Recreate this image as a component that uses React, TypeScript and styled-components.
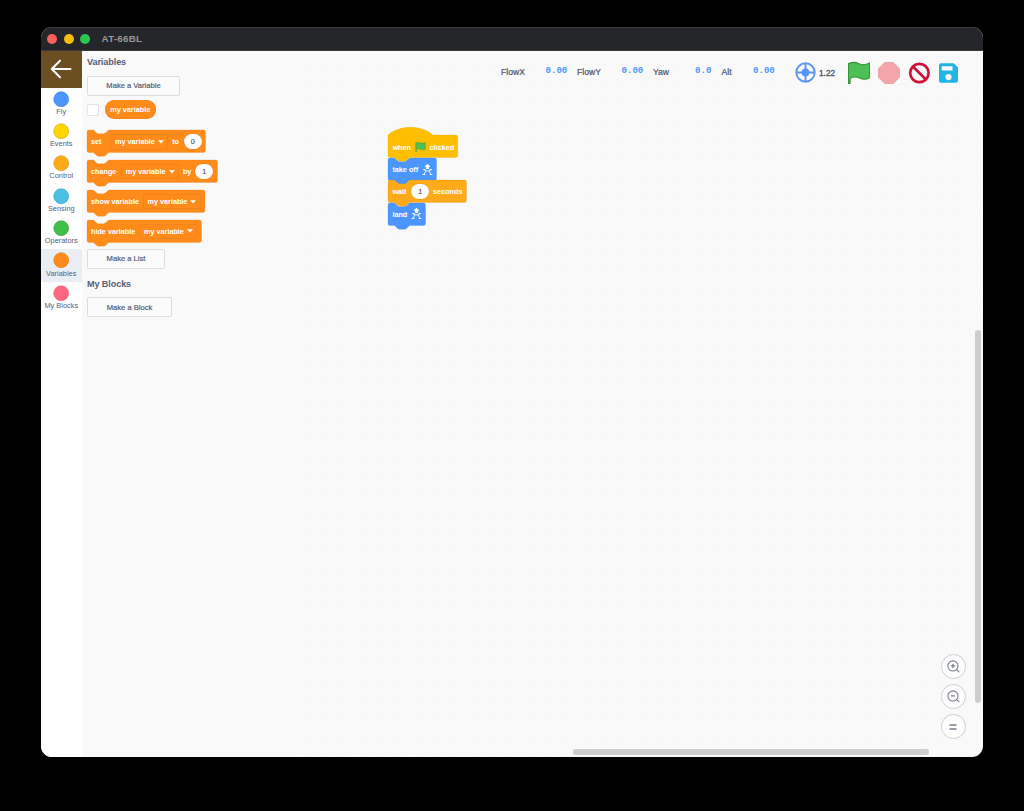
import React from "react";
import styled, { createGlobalStyle } from "styled-components";

const Global = createGlobalStyle`
  * { box-sizing: border-box; }
  body { margin: 0; background: #000; font-family: "Liberation Sans", Arial, sans-serif; overflow: hidden; }
`;
const Desktop = styled.div`
  width: 1024px; height: 811px; background: #000; padding: 27px 0 0 40.5px;
`;
const Window = styled.div`
  width: 942.7px; height: 730.3px; border-radius: 11px; overflow: hidden; background: #f9f9f9;
  display: flex; flex-direction: column;
`;
const TitleBar = styled.div`
  height: 24px; flex: none; background: #252629; border-bottom: 1px solid #3b3a3f; box-shadow: inset 0 1px #3a3a3c;
  display: flex; align-items: center; padding-left: 6.5px; gap: 6.7px;
`;
const Light = styled.span<{ $c: string }>`
  width: 10px; height: 10px; border-radius: 50%; background: ${(p) => p.$c};
`;
const Title = styled.span`
  margin-left: 4.5px; font: bold 9.8px "Liberation Sans", sans-serif; color: #98989b; letter-spacing: 0.25px;
`;
const Body = styled.div`display: flex; flex: 1; min-height: 0;`;
const Sidebar = styled.nav`width: 41.5px; flex: none; background: #fff;`;
const Back = styled.button`
  display: flex; align-items: center; justify-content: center; width: 100%; height: 36.5px;
  background: #6b4f22; border: 0; padding: 0;
`;
const Category = styled.div<{ $on?: boolean }>`
  height: 32.4px; display: flex; flex-direction: column; align-items: center; padding-top: 3px;
  background: ${(p) => (p.$on ? "#e9eef5" : "transparent")};
  font-size: 7.4px; line-height: 9px; color: #575e75; white-space: nowrap;
`;
const Dot = styled.svg`flex: none; margin-bottom: 0.1px;`;
const Flyout = styled.section`
  width: 203px; flex: none; padding: 5px 0 0 5px; display: flex; flex-direction: column; align-items: flex-start;
`;
const Heading = styled.h2<{ $mt?: number }>`
  margin: ${(p) => p.$mt ?? 0}px 0 0; font-size: 9.1px; line-height: 12px; font-weight: bold; color: #575e75;
  letter-spacing: -0.1px;
`;
const FlyButton = styled.button<{ $w: number; $mt: number }>`
  width: ${(p) => p.$w}px; height: 19.5px; margin: ${(p) => p.$mt}px 0 0; padding: 0;
  border: 1px solid #dcdde2; border-radius: 2px; background: #fbfbfb;
  font: 500 7.6px "Liberation Sans", sans-serif; color: #575e75; -webkit-text-stroke: 0.2px #575e75;
`;
const VariableRow = styled.div`display: flex; align-items: center; gap: 5.5px; margin-top: 4px; height: 20px;`;
const Check = styled.span`width: 12px; height: 12px; border: 1px solid #e2e2e6; border-radius: 2px; background: #fff;`;
const Pill = styled.span`
  width: 51.5px; height: 19px; border-radius: 10px; background: #ff8c1a; box-shadow: inset 0 0 0 0.5px #f5821a;
  display: flex; align-items: center; justify-content: center;
  font-size: 7.3px; font-weight: bold; color: #fff;
`;
const BlockList = styled.div`display: flex; flex-direction: column; gap: 7.4px; margin-top: 10.7px;`;
const BlockBox = styled.div<{ $w: number }>`
  position: relative; width: ${(p) => p.$w}px; height: 22.45px; display: flex; align-items: center;
  padding: 1px 0 0 4px; font-size: 7.25px; font-weight: bold; color: #fff; white-space: nowrap;
`;
const Outline = styled.svg`position: absolute; left: 0; top: 0; overflow: visible;`;
const Word = styled.span<{ $w: number }>`position: relative; width: ${(p) => p.$w}px; flex: none;`;
const Dropdown = styled.span`
  position: relative; width: 58px; height: 15.5px; flex: none; border: 1px solid #f5821a; border-radius: 2px;
  display: flex; align-items: center; gap: 3px; padding-left: 4px;
`;
const Caret = styled.svg`flex: none;`;
const NumberField = styled.span<{ $b: string }>`
  position: relative; width: 18px; height: 15px; flex: none; border-radius: 8px; background: #fff;
  color: #575e75; font-weight: normal; -webkit-text-stroke: 0.2px #575e75; box-shadow: 0 0 0 0.3px ${(p) => p.$b};
  display: flex; align-items: center; justify-content: center;
`;
const Glyph = styled.svg`position: relative; flex: none;`;
const Workspace = styled.main`
  flex: 1; min-width: 0; display: flex; flex-direction: column; position: relative;
  background:
    linear-gradient(#f9f9f9, #f9f9f9) 0 0 / 14px 100% no-repeat,
    radial-gradient(circle, #ebebeb 0.5px, transparent 1.1px) 10.2px 4.3px / 18.71px 18.71px;
`;
const Toolbar = styled.header`
  height: 43px; display: flex; align-items: center; padding-left: 216px; color: #4c5269;
`;
const StatLabel = styled.span<{ $w: number }>`
  width: ${(p) => p.$w}px; font-size: 8.6px; -webkit-text-stroke: 0.2px #4c5269; margin-top: -1.5px;
`;
const StatValue = styled.span<{ $w: number }>`
  width: ${(p) => p.$w}px; font: bold 9.1px "Liberation Mono", monospace; color: #4c97ff; margin-top: -4px;
`;
const Version = styled.span`width: 28.5px; margin-left: 3px; font-size: 8.3px; -webkit-text-stroke: 0.3px #4c5269;`;
const Tool = styled.svg<{ $ml?: number }>`flex: none; margin-left: ${(p) => p.$ml ?? 0}px; overflow: visible;`;
const Script = styled.div`
  position: absolute; left: 103.4px; top: 84.4px; display: flex; flex-direction: column;
`;
const ZoomControls = styled.div`
  position: absolute; left: 655.6px; top: 602.8px; display: flex; flex-direction: column; gap: 5.3px;
`;
const ZoomButton = styled.button`
  width: 25px; height: 25px; border-radius: 50%; border: 1px solid #cfcfd2; background: #fff; padding: 0;
  display: flex; align-items: center; justify-content: center;
`;
const VScroll = styled.div`
  position: absolute; left: 690px; top: 279px; width: 6px; height: 373px; border-radius: 3px; background: #cecdce;
`;
const HScroll = styled.div`
  position: absolute; left: 288px; top: 698px; width: 356px; height: 6px; border-radius: 3px; background: #cecdce;
`;

const SCALE = 0.4677;
const NOTCH = "c2 0 3 1 4 2l4 4c1 1 2 2 4 2h12c2 0 3-1 4-2l4-4c1-1 2-2 4-2";
const NOTCH_BACK = "c-2 0-3 1-4 2l-4 4c-1 1-2 2-4 2h-12c-2 0-3-1-4-2l-4-4c-1-1-2-2-4-2";

type BlockProps = { w: number; fill: string; stroke: string; hat?: boolean; children: React.ReactNode };
function Block({ w, fill, stroke, hat, children }: BlockProps) {
  const u = w / SCALE;
  const start = hat ? "M0 0c25-22 71-22 96 0" : `M0 4A4 4 0 0 1 4 0H12${NOTCH}`;
  const d = `${start}H${u - 4}a4 4 0 0 1 4 4V44a4 4 0 0 1-4 4H48${NOTCH_BACK}H4a4 4 0 0 1-4-4z`;
  return (
    <BlockBox $w={w}>
      <Outline width={w} height={22.45}>
        <path transform={`scale(${SCALE})`} d={d} fill={fill} stroke={stroke} strokeWidth="0.8" strokeOpacity="0.6" />
      </Outline>
      {children}
    </BlockBox>
  );
}

const VarMenu = () => (
  <Dropdown>
    my variable
    <Caret width="6" height="4" viewBox="0 0 6 4"><path d="M.6.500H5.400L3 3.200z" fill="#fff" stroke="#fff" strokeWidth="0.600" strokeLinejoin="round" /></Caret>
  </Dropdown>
);
const Drone = () => (
  <Glyph width="12" height="12" viewBox="0.500 0.500 12 12" fill="none" stroke="#fff" strokeWidth="0.900">
    <path d="M6 0.300L9 3.200L7.400 3.600V5.600H4.600V3.600L3 3.200z" fill="#fff" stroke="none" />
    <path d="M1.600 6.200H4.200M7.800 6.200H10.400" />
    <path d="M2.800 6.500L4.600 7.400H7.400L9.200 6.500M4.400 7.600L2.500 10.600M7.600 7.600L9.500 10.600" />
    <path d="M1 11H3.800M8.200 11H11" />
  </Glyph>
);
const FLAG = "M1 1.500C5-.6 8 .4 10.500 1.600S17 2.900 20.500 1V15C17 17 13.500 16.500 11 15.300S5 14 2 15.700V20.500H.5V1.500z";

const categories = [
  ["Fly", "#4c97ff", "#3373cc"], ["Events", "#ffd500", "#cc9900"], ["Control", "#ffab19", "#cf8b17"],
  ["Sensing", "#4cbfe6", "#2e8eb8"], ["Operators", "#40bf4a", "#389438"],
  ["Variables", "#ff8c1a", "#db6e00"], ["My Blocks", "#ff6680", "#ff4d6a"],
];
const orange = { fill: "#ff8c1a", stroke: "#db6e00" };
const blue = { fill: "#4c97ff", stroke: "#3373cc" };

export default function App() {
  return (
    <Desktop>
      <Global />
      <Window>
        <TitleBar>
          <Light $c="#ff5f5a" /><Light $c="#f9bd0b" /><Light $c="#2dc551" />
          <Title>AT-66BL</Title>
        </TitleBar>
        <Body>
          <Sidebar>
            <Back>
              <svg width="22" height="20" viewBox="0 0 22 20" fill="none" stroke="#fff" strokeWidth="2.100" strokeLinecap="round" strokeLinejoin="round">
                <path d="M20.500 10H1.800M10 1.700L1.800 10L10 18.300" />
              </svg>
            </Back>
            {categories.map(([name, c, b]) => (
              <Category key={name} $on={name === "Variables"}>
                <Dot width="16" height="16"><circle cx="8.200" cy="8.200" r="7.500" fill={c} stroke={b} strokeWidth="0.500" /></Dot>
                {name}
              </Category>
            ))}
          </Sidebar>
          <Flyout>
            <Heading>Variables</Heading>
            <FlyButton $w={93} $mt={8}>Make a Variable</FlyButton>
            <VariableRow><Check /><Pill>my variable</Pill></VariableRow>
            <BlockList>
              <Block w={118.5} {...orange}>
                <Word $w={19}>set</Word><VarMenu /><Word $w={4.2} /><Word $w={11.5}>to</Word><NumberField $b="#db6e00">0</NumberField>
              </Block>
              <Block w={130.5} {...orange}>
                <Word $w={29.7}>change</Word><VarMenu /><Word $w={4.2} /><Word $w={12.5}>by</Word><NumberField $b="#db6e00">1</NumberField>
              </Block>
              <Block w={118} {...orange}><Word $w={51.5}>show variable</Word><VarMenu /></Block>
              <Block w={114.5} {...orange}><Word $w={48}>hide variable</Word><VarMenu /></Block>
            </BlockList>
            <FlyButton $w={78} $mt={7}>Make a List</FlyButton>
            <Heading $mt={9}>My Blocks</Heading>
            <FlyButton $w={85} $mt={7.7}>Make a Block</FlyButton>
          </Flyout>
          <Workspace>
            <Toolbar>
              <StatLabel $w={44.5}>FlowX</StatLabel><StatValue $w={31.5}>0.00</StatValue>
              <StatLabel $w={44.5}>FlowY</StatLabel><StatValue $w={31.5}>0.00</StatValue>
              <StatLabel $w={42}>Yaw</StatLabel><StatValue $w={26.5}>0.0</StatValue>
              <StatLabel $w={31.5}>Alt</StatLabel><StatValue $w={42}>0.00</StatValue>
              <Tool width="21" height="21" viewBox="0 0 21 21" fill="none" stroke="#5a96f2" strokeWidth="1.900">
                <circle cx="10.500" cy="10.500" r="9.200" /><circle cx="10.500" cy="10.500" r="3.900" fill="#5a96f2" stroke="none" />
                <path d="M10.500 1V20M1 10.500H20" />
              </Tool>
              <Version>1.22</Version>
              <Tool width="22" height="22" viewBox="0 0 21 21"><path d={FLAG} fill="#4cbf56" stroke="#389438" strokeWidth="1" /></Tool>
              <Tool $ml={8} width="22" height="22" viewBox="0 0 22 22">
                <path d="M6.700.5H15.300L21.500 6.700V15.300L15.300 21.500H6.700L.5 15.300V6.700z" fill="#f3a5a8" stroke="#e29ea0" strokeWidth="0.800" strokeLinejoin="round" />
              </Tool>
              <Tool $ml={8.8} width="22" height="22" viewBox="-0.400 0 22 22" fill="none" stroke="#d0103a" strokeWidth="2.700">
                <circle cx="11" cy="11" r="9.200" /><path d="M4.500 4.500L17.500 17.500" />
              </Tool>
              <Tool $ml={9} width="19" height="20" viewBox="0 0 19 20">
                <path fillRule="evenodd" fill="#20b4e6" d="M2 .3H14.700L19 4.500V17.800A2 2 0 0 1 17 19.800H2A2 2 0 0 1 0 17.800V2.300A2 2 0 0 1 2 .3zM2.700 3.200V7.500H13.500V3.200zM9.500 11A3.100 3.100 0 1 0 9.500 17.200A3.100 3.100 0 1 0 9.500 11z" />
              </Tool>
            </Toolbar>
            <Script>
              <Block w={69.7} fill="#ffbf00" stroke="#cc9900" hat>
                <Word $w={22.5}>when</Word>
                <Glyph width="11" height="10" viewBox="0 0 21 21"><path d={FLAG} fill="#4cbf56" stroke="#45993d" /></Glyph>
                <Word $w={3.7} /><Word $w={26}>clicked</Word>
              </Block>
              <Block w={48.5} {...blue}><Word $w={29.2}>take off</Word><Drone /></Block>
              <Block w={78.5} fill="#ffab19" stroke="#cf8b17">
                <Word $w={18.8}>wait</Word><NumberField $b="#cf8b17">1</NumberField><Word $w={3.9} /><Word $w={30}>seconds</Word>
              </Block>
              <Block w={37.5} {...blue}><Word $w={18.2}>land</Word><Drone /></Block>
            </Script>
            <ZoomControls>
              {["M4 5.500H7M5.500 4V7", "M4 5.500H7"].map((d) => (
                <ZoomButton key={d}>
                  <svg width="13" height="13" viewBox="0 0 12 12" fill="none" stroke="#797d8e" strokeWidth="1" strokeLinecap="round">
                    <circle cx="5.500" cy="5.500" r="4.700" /><path d={d} strokeWidth="1.200" /><path d="M9.200 9.200L11 11" />
                  </svg>
                </ZoomButton>
              ))}
              <ZoomButton>
                <svg width="8" height="6" viewBox="0 0 8 6" stroke="#797d8e" strokeWidth="1.300"><path d="M.5 1H7.500M.5 5H7.500" /></svg>
              </ZoomButton>
            </ZoomControls>
            <VScroll /><HScroll />
          </Workspace>
        </Body>
      </Window>
    </Desktop>
  );
}
